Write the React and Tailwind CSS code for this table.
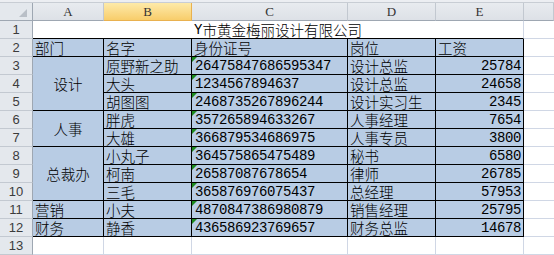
import React from 'react';

const people = [
  { dept: '设计', span: 3, name: '原野新之助', id: '26475847686595347', job: '设计总监', pay: '25784' },
  { name: '大头', id: '1234567894637', job: '设计总监', pay: '24658' },
  { name: '胡图图', id: '2468735267896244', job: '设计实习生', pay: '2345' },
  { dept: '人事', span: 2, name: '胖虎', id: '357265894633267', job: '人事经理', pay: '7654' },
  { name: '大雄', id: '366879534686975', job: '人事专员', pay: '3800' },
  { dept: '总裁办', span: 3, name: '小丸子', id: '364575865475489', job: '秘书', pay: '6580' },
  { name: '柯南', id: '26587087678654', job: '律师', pay: '26785' },
  { name: '三毛', id: '365876976075437', job: '总经理', pay: '57953' },
  { dept: '营销', span: 1, left: true, name: '小夫', id: '4870847386980879', job: '销售经理', pay: '25795' },
  { dept: '财务', span: 1, left: true, name: '静香', id: '436586923769657', job: '财务总监', pay: '14678' },
];

const cjk = "font-['Noto_Sans_CJK_SC',sans-serif] font-light text-[14.5px] text-black leading-[16px]";
const mono = "font-['Liberation_Mono',monospace] text-[14px] tracking-[-0.4px] text-black leading-[16px]";

const RowHead = ({ n }) => (
  <div className="flex items-center justify-center bg-[#e4e8ed] border-r border-b border-r-[#9ea7b2] border-b-[#c3c9d1] font-['Liberation_Sans',sans-serif] text-[13px] leading-[16px] text-[#3b3b3b]">
    {n}
  </div>
);

const ColHead = ({ label, active }) => (
  <div
    className={
      active
        ? "flex items-center justify-center bg-linear-to-b from-[#fdeaa9] to-[#f8cd6a] border-r border-b border-[#e9b14f] font-['Liberation_Serif',serif] text-[13px] leading-[16px] text-[#333]"
        : "flex items-center justify-center bg-linear-to-b from-[#e8ebef] to-[#dde1e7] border-r border-b border-r-[#c2c8d0] border-b-[#9ea7b2] font-['Liberation_Serif',serif] text-[13px] leading-[16px] text-[#333]"
    }
  >
    {label}
  </div>
);

const Cell = ({ children, className = '' }) => (
  <div className={`flex items-center border-r border-b border-black bg-[#b8cce4] px-[2px] ${className}`}>{children}</div>
);

const Blank = ({ last }) => (
  <div className={`bg-white border-b border-[#d0d7e5] ${last ? '' : 'border-r'}`} />
);

export default function App() {
  return (
    <div className="w-[554px] h-[255px] overflow-hidden bg-white">
      <div className="h-[3px] bg-[#eceef2] border-b border-[#c8cdd4]" />
      <div className="grid grid-cols-[33px_71px_88px_156px_88px_88px_30px] auto-rows-[18px]">
        {/* column headers */}
        <div className="relative bg-[#e4e8ed] border-r border-b border-r-[#9ea7b2] border-b-[#9ea7b2]">
          <div className="absolute right-[5px] bottom-[3px] w-[8px] h-[8px] bg-[#b9bfc7] [clip-path:polygon(100%_0,100%_100%,0_100%)]" />
        </div>
        <ColHead label="A" />
        <ColHead label="B" active />
        <ColHead label="C" />
        <ColHead label="D" />
        <ColHead label="E" />
        <ColHead label="" />

        {/* row 1 */}
        <RowHead n={1} />
        <div className={`col-span-5 flex items-center justify-center bg-white border-r border-b border-r-[#d0d7e5] border-b-black ${cjk}`}>
          <span className="font-['Liberation_Mono',monospace] text-[14px] font-normal">Y</span>市黄金梅丽设计有限公司
        </div>
        <Blank last />

        {/* row 2 */}
        <RowHead n={2} />
        <Cell className={cjk}>部门</Cell>
        <Cell className={cjk}>名字</Cell>
        <Cell className={cjk}>身份证号</Cell>
        <Cell className={cjk}>岗位</Cell>
        <Cell className={cjk}>工资</Cell>
        <Blank last />

        {people.map((p, i) => (
          <React.Fragment key={i}>
            <RowHead n={i + 3} />
            {p.dept && (
              <Cell
                className={`${cjk} ${p.left ? '' : 'justify-center'} ${
                  p.span === 3 ? 'row-span-3' : p.span === 2 ? 'row-span-2' : ''
                }`}
              >
                {p.dept}
              </Cell>
            )}
            <Cell className={cjk}>{p.name}</Cell>
            <Cell className={`relative px-[3px] ${mono}`}>
              <span className="absolute left-0 top-0 w-[5px] h-[5px] bg-[#1d8a1d] [clip-path:polygon(0_0,100%_0,0_100%)]" />
              {p.id}
            </Cell>
            <Cell className={cjk}>{p.job}</Cell>
            <Cell className={`justify-end pr-[2px] ${mono}`}>{p.pay}</Cell>
            <Blank last />
          </React.Fragment>
        ))}

        {/* row 13 */}
        <RowHead n={13} />
        <Blank />
        <Blank />
        <Blank />
        <Blank />
        <Blank />
        <Blank last />
      </div>
    </div>
  );
}
